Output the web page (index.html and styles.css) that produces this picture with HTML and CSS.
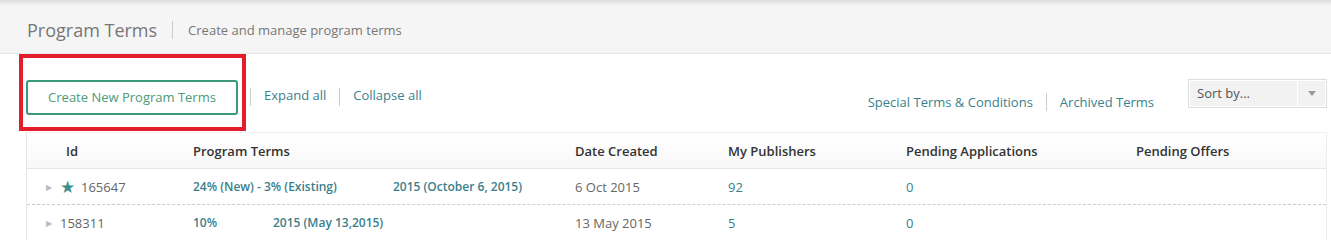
FILE: index.html
```html
<!DOCTYPE html>
<html lang="en">
<head>
    <title>Program Terms</title>
    <link rel="stylesheet" href="styles.css">
</head>
<body>
    <header class="page-header">
        <h1>Program Terms</h1>
        <span class="divider"></span>
        <span class="subtitle">Create and manage program terms</span>
    </header>
    <div class="toolbar">
        <div class="toolbar-left">
            <button class="btn-create">Create New Program Terms</button>
            <span class="divider"></span>
            <a href="#">Expand all</a>
            <span class="divider"></span>
            <a href="#">Collapse all</a>
            <div class="highlight"></div>
        </div>
        <div class="toolbar-right">
            <a href="#">Special Terms &amp; Conditions</a>
            <span class="divider"></span>
            <a href="#">Archived Terms</a>
            <div class="sort-select">
                <span class="sort-label">Sort by...</span>
                <span class="sort-arrow"></span>
            </div>
        </div>
    </div>
    <div class="terms-table">
        <div class="row head">
            <div class="cell id-cell">Id</div>
            <div class="cell">Program Terms</div>
            <div class="cell">Date Created</div>
            <div class="cell">My Publishers</div>
            <div class="cell">Pending Applications</div>
            <div class="cell">Pending Offers</div>
        </div>
        <div class="row">
            <div class="cell id-cell"><span class="caret">&#9654;</span><span class="star">&#9733;</span>165647</div>
            <div class="cell terms"><span class="term-a">24% (New) - 3% (Existing)</span><span>2015 (October 6, 2015)</span></div>
            <div class="cell">6 Oct 2015</div>
            <div class="cell link">92</div>
            <div class="cell link">0</div>
            <div class="cell"></div>
        </div>
        <div class="row">
            <div class="cell id-cell"><span class="caret">&#9654;</span>158311</div>
            <div class="cell terms"><span class="term-b">10%</span><span>2015 (May 13,2015)</span></div>
            <div class="cell">13 May 2015</div>
            <div class="cell link">5</div>
            <div class="cell link">0</div>
            <div class="cell"></div>
        </div>
    </div>
</body>
</html>
```

FILE: styles.css
```css
body {
    font-family: 'Open Sans', sans-serif;
    margin: 0;
    padding: 0;
    background: #fff;
    color: #666;
    font-size: 13px;
}
a {
    color: #3a7f8c;
    text-decoration: none;
}
.divider {
    display: inline-block;
    width: 1px;
    height: 18px;
    background: #ccc;
}
.page-header {
    height: 54px;
    box-sizing: border-box;
    display: flex;
    align-items: center;
    padding: 6px 0 0 27px;
    background: linear-gradient(#dcdcdc, #f5f5f5 6px);
    border-bottom: 1px solid #e6e6e6;
}
.page-header h1 {
    margin: 0;
    font-size: 18px;
    font-weight: 400;
    color: #777;
}
.page-header .divider {
    margin: 0 15px;
}
.subtitle {
    color: #777;
    font-size: 13px;
}
.toolbar {
    display: flex;
    justify-content: space-between;
    height: 78px;
    padding: 0 4px 0 26px;
}
.toolbar-left {
    position: relative;
    display: flex;
    align-items: center;
    gap: 13px;
    padding-top: 8px;
}
.toolbar-left a {
    margin-top: -4px;
}
.btn-create {
    font-family: inherit;
    font-size: 13px;
    color: #4c9a79;
    background: #fff;
    border: 2px solid #3d9a76;
    border-radius: 3px;
    width: 212px;
    height: 35px;
    margin-right: -1px;
}
.highlight {
    position: absolute;
    left: -7px;
    top: 0;
    width: 219px;
    height: 69px;
    border: 4px solid #e31e2a;
    pointer-events: none;
}
.toolbar-right {
    display: flex;
    align-items: center;
    gap: 13px;
    padding-top: 17px;
}
.toolbar-right .sort-select {
    margin-left: 21px;
    align-self: flex-start;
    margin-top: 8px;
}
.sort-select {
    display: flex;
    width: 135px;
    height: 25px;
    border: 1px solid #ddd;
    padding: 1px;
    gap: 1px;
}
.sort-label {
    flex: 1;
    background: #f2f2f2;
    color: #555;
    padding: 3px 0 0 7px;
}
.sort-arrow {
    width: 27px;
    background: #f2f2f2;
    position: relative;
}
.sort-arrow::after {
    content: '';
    position: absolute;
    left: 10px;
    top: 10px;
    border-left: 4px solid transparent;
    border-right: 4px solid transparent;
    border-top: 5px solid #999;
}
.terms-table {
    margin: 0 4px 0 26px;
    border-left: 1px solid #e6e6e6;
    border-right: 1px solid #eee;
    border-top: 1px solid #eee;
}
.row {
    display: grid;
    grid-template-columns: 166px 382px 153px 178px 230px 1fr;
    height: 35px;
    align-items: center;
    border-bottom: 1px dashed #ccc;
}
.row.head {
    height: 35px;
    background: linear-gradient(#fff, #f8f8f8);
    border-bottom: 1px solid #e6e6e6;
    color: #333;
    font-weight: 600;
}
.cell {
    white-space: nowrap;
}
.id-cell {
    padding-left: 19px;
    display: flex;
    align-items: center;
}
.head .id-cell {
    padding-left: 39px;
}
.caret {
    color: #bbb;
    font-size: 8px;
    margin-right: 8px;
}
.star {
    color: #3c8f8a;
    font-size: 17px;
    margin-right: 6px;
    line-height: 1;
}
.terms {
    color: #3a7f8c;
    font-weight: 600;
    font-size: 12px;
}
.term-a {
    display: inline-block;
    width: 200px;
}
.term-b {
    display: inline-block;
    width: 80px;
}
.link {
    color: #3a7f8c;
}
```
